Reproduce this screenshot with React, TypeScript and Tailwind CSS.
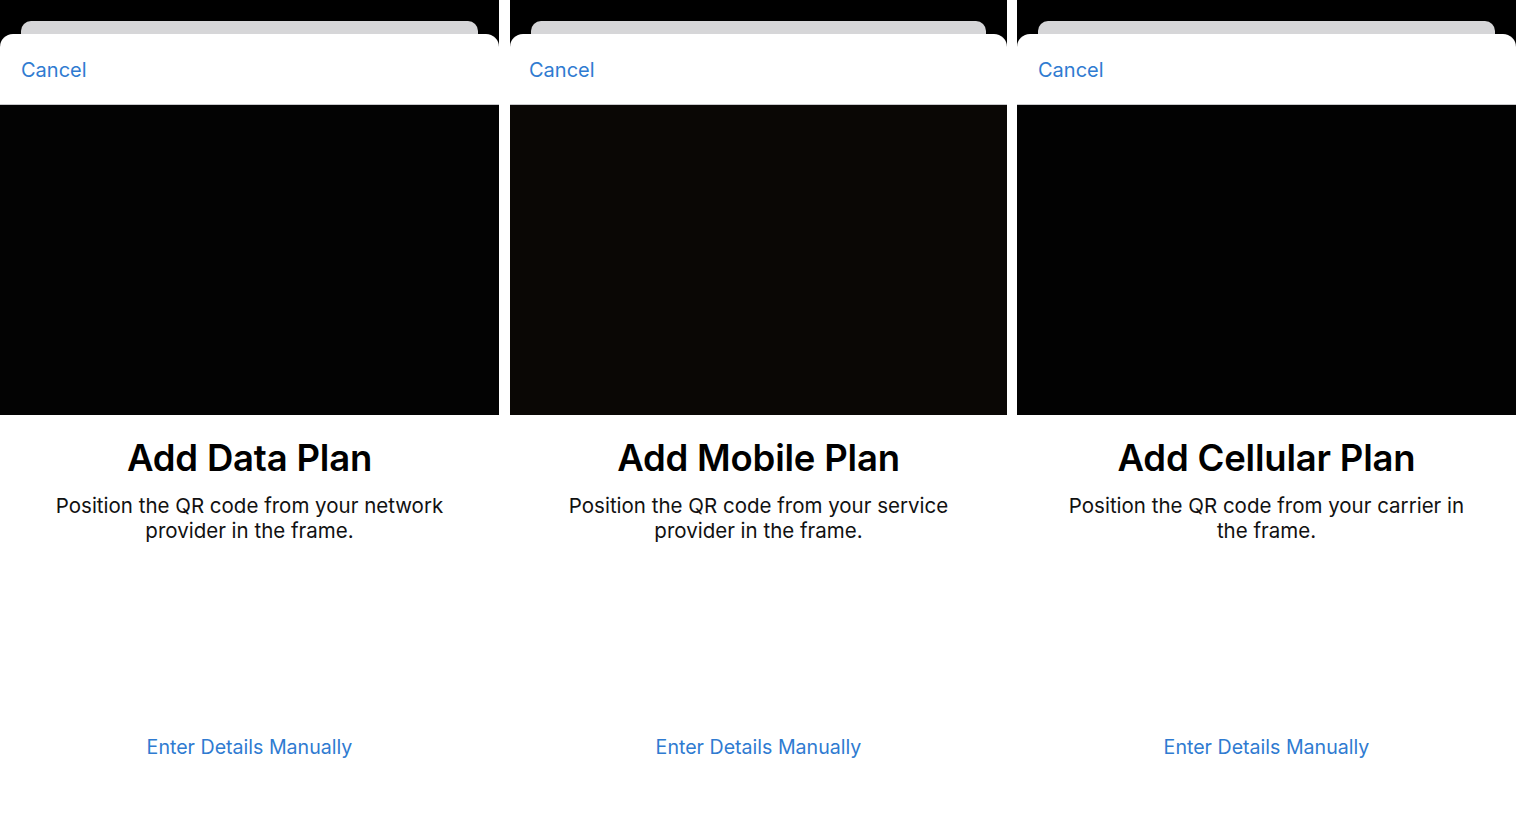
const panels = [
  {
    title: "Add Data Plan",
    line1: "Position the QR code from your network",
    line2: "provider in the frame.",
    camera: "bg-[#030303]",
    width: "w-[499px]",
    pad: "px-[21px]",
  },
  {
    title: "Add Mobile Plan",
    line1: "Position the QR code from your service",
    line2: "provider in the frame.",
    camera: "bg-[#0a0705]",
    width: "w-[497px]",
    pad: "px-[19px]",
  },
  {
    title: "Add Cellular Plan",
    line1: "Position the QR code from your carrier in",
    line2: "the frame.",
    camera: "bg-[#020202]",
    width: "w-[499px]",
    pad: "px-[21px]",
  },
]

const Panel = ({ p }: { p: (typeof panels)[number] }) => (
  <div className={`${p.width} shrink-0 flex flex-col bg-black h-full`}>
    {/* card peeking behind the sheet */}
    <div className="h-[34px] flex flex-col justify-end px-[21px]">
      <div className="h-[13px] bg-[#d6d6d8] rounded-t-[10px]" />
    </div>

    {/* sheet */}
    <div className="flex-1 flex flex-col bg-white rounded-t-[13px]">
      <div className={`h-[71px] flex items-center pt-[2px] ${p.pad} border-b border-[#c9c9cc]`}>
        <span className="text-[20px] text-[#2f7bd1]">Cancel</span>
      </div>
      <div className={`h-[310px] ${p.camera}`} />
      <div className="flex flex-col items-center pt-[21px]">
        <h1 className="text-[36.5px] leading-[44px] font-semibold text-black tracking-[-0.2px]">
          {p.title}
        </h1>
        <p className="mt-[13px] text-[20.5px] leading-[25px] text-[#111] text-center">
          {p.line1}
          <br />
          {p.line2}
        </p>
      </div>
      <div className="flex-1" />
      <div className="flex justify-center pb-[68px]">
        <span className="text-[19.6px] text-[#2f7bd1]">Enter Details Manually</span>
      </div>
    </div>
  </div>
)

export default function App() {
  return (
    <div
      className="w-[1516px] h-[830px] bg-white flex gap-0 overflow-hidden"
      style={{ fontFamily: "Inter, 'Noto Sans', sans-serif" }}
    >
      <Panel p={panels[0]} />
      <div className="w-[11px] shrink-0 bg-white" />
      <Panel p={panels[1]} />
      <div className="w-[10px] shrink-0 bg-white" />
      <Panel p={panels[2]} />
    </div>
  )
}
